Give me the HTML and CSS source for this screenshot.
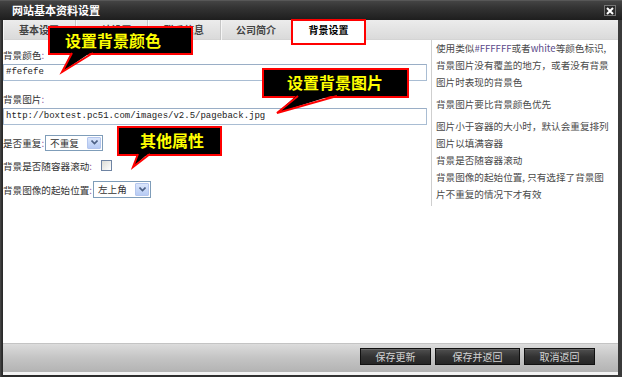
FILE: index.html
```html
<!DOCTYPE html>
<html lang="zh-CN">
<head>
    <meta charset="UTF-8">
    <title>网站基本资料设置</title>
    <link rel="stylesheet" href="styles.css">
</head>
<body>
<div class="window">
    <div class="titlebar">
        <span class="title">网站基本资料设置</span>
        <span class="close">
            <svg width="8" height="8" viewBox="0 0 8 8"><path d="M1 1L7 7M7 1L1 7" stroke="#fff" stroke-width="2"/></svg>
        </span>
    </div>
    <div class="frame">
        <ul class="tabs">
            <li>基本设置</li>
            <li>网站设置</li>
            <li>联系信息</li>
            <li>公司简介</li>
            <li class="cur">背景设置</li>
        </ul>
        <div class="content">
            <div class="form">
                <div class="label">背景颜色<i>:</i></div>
                <div class="text mono">#fefefe</div>
                <div class="label second">背景图片<i>:</i></div>
                <div class="text mono">http://boxtest.pc51.com/images/v2.5/pageback.jpg</div>
                <div class="row r1">
                    <span>是否重复<i>:</i></span>
                    <span class="select"><span class="val">不重复</span><span class="arrow"><svg width="7" height="5" viewBox="0 0 7 5"><path d="M0.5 0.5L3.5 3.5L6.5 0.5" fill="none" stroke="#4d6185" stroke-width="1.6"/></svg></span></span>
                </div>
                <div class="row r2">
                    <span>背景是否随容器滚动<i>:</i></span>
                    <span class="check"></span>
                </div>
                <div class="row r3">
                    <span>背景图像的起始位置<i>:</i></span>
                    <span class="select tall"><span class="val">左上角</span><span class="arrow"><svg width="7" height="5" viewBox="0 0 7 5"><path d="M0.5 0.5L3.5 3.5L6.5 0.5" fill="none" stroke="#4d6185" stroke-width="1.6"/></svg></span></span>
                </div>
            </div>
            <div class="help">
                <p>使用类似<em>#FFFFFF</em>或者<em>white</em>等颜色标识,<br>背景图片没有覆盖的地方，或者没有背景<br>图片时表现的背景色</p>
                <p>背景图片要比背景颜色优先</p>
                <p>图片小于容器的大小时，默认会重复排列<br>图片以填满容器<br>背景是否随容器滚动<br>背景图像的起始位置, 只有选择了背景图<br>片不重复的情况下才有效</p>
            </div>
        </div>
        <div class="toolbar">
            <span class="btn">保存更新</span>
            <span class="btn wide">保存并返回</span>
            <span class="btn">取消返回</span>
        </div>
    </div>

    <div class="callout c1">设置背景颜色
        <svg class="tail" width="60" height="50"><polygon points="24,25 45,25 14,46" fill="#000"/><polyline points="24,27 14,46 45,27" fill="none" stroke="#f00" stroke-width="2"/></svg>
    </div>
    <div class="callout c2">设置背景图片
        <svg class="tail" width="80" height="50"><polygon points="36,26 75,26 15,45" fill="#000"/><polyline points="36,28 15,45 75,28" fill="none" stroke="#f00" stroke-width="2"/></svg>
    </div>
    <div class="callout c3">其他属性
        <svg class="tail" width="40" height="45"><polygon points="21,26 33,26 16,41" fill="#000"/><polyline points="21,28 16,41 33,28" fill="none" stroke="#f00" stroke-width="2"/></svg>
    </div>
</div>
</body>
</html>
```

FILE: styles.css
```css
* {margin:0; padding:0; list-style:none; box-sizing:border-box;}
body {font-family:"Noto Sans CJK SC", "Liberation Sans", sans-serif; font-size:10px; color:#333;}
i {font-style:normal; color:#7a3a8c;}

.window {width:622px; height:377px; position:relative; display:flex; flex-direction:column;
    background:linear-gradient(90deg, #4a4a4a, #2a2a2a 2px, #3a3a3a);}

.titlebar {height:20px; flex:none; display:flex; align-items:center; justify-content:space-between; padding:0 6px 0 12px;
    background:linear-gradient(#6a6a6a 0, #444 1px, #333 40%, #1e1e1e 100%);}
.titlebar .title {color:#fff; font-size:11px; font-weight:bold; line-height:20px;}
.titlebar .close {width:12px; height:11px; display:flex; align-items:center; justify-content:center; margin-top:1px;
    background:#2a2a2a; border:1px solid #777;}

.frame {flex:1; display:flex; flex-direction:column; margin:0 4px 2px 3px; background:#f3f3f3;}

.tabs {height:20px; flex:none; display:flex; background:linear-gradient(#ececec, #dadada); border-bottom:1px solid #d4d4d4;}
.tabs li {height:20px; line-height:20px; text-align:center; font-weight:bold; color:#444; border-right:1px solid #c6c6c6; box-shadow:inset 1px 0 0 #f6f6f6;}
.tabs li:nth-child(1) {width:73px;}
.tabs li:nth-child(2) {width:72px;}
.tabs li:nth-child(3) {width:73px;}
.tabs li:nth-child(4) {width:71px;}
.tabs li.cur {width:73px; background:#fff; color:#000; position:relative; border-right:none; box-shadow:none;}
.tabs li.cur:after {content:""; position:absolute; left:-1px; right:-1px; top:-1px; bottom:-5px; border:2px solid #f00; z-index:5;}

.content {flex:1; display:flex; align-items:flex-start; background:#fff; font-size:9.6px;}
.form {width:428px; flex:none; padding-top:8px;}
.label {line-height:14px; height:14px;}
.label.second {margin-top:11px;}
.text {width:424px; height:17px; margin-top:2px; border:1px solid #a9bdd3; border-top-color:#9aaec6; padding-left:2px; line-height:15px; color:#222;}
.mono {font-family:"Liberation Mono", monospace; font-size:9px;}

.row {display:flex; align-items:center; height:17px;}
.row.r1 {margin-top:9px;}
.row.r2 {margin-top:6px;}
.row.r3 {margin-top:7px;}
.select {display:flex; width:58px; height:16px; margin-left:1px; border:1px solid #7f9db9; background:#fff;}
.select.tall {height:17px;}
.select .val {flex:1; padding-left:4px; line-height:14px;}
.select .arrow {width:14px; display:flex; align-items:center; justify-content:center; margin:1px;
    background:linear-gradient(#dbe6fb, #b7cbf4); border:1px solid #b4c6ee; border-radius:1px;}
.check {width:11px; height:11px; margin-left:9px; border:1px solid #6f84a3; background:linear-gradient(135deg, #dcdcd6, #fff);}

.help {flex:1; border-left:1px solid #cfcfcf; padding:0 0 3px 4px; line-height:17px; color:#4a4a4a;}
.help p {margin-bottom:5px;}
.help p:last-child {margin-bottom:0;}
.help em {font-style:normal; color:#5a4a8a;}

.toolbar {height:29px; flex:none; display:flex; justify-content:flex-end; align-items:flex-start; gap:4px; padding:4px 23px 0 0;
    border-top:1px solid #c4c4c4; background:linear-gradient(#dcdcdc, #c4c4c4 50%, #b3b3b3); margin-bottom:3px;}
.btn {width:71px; height:17px; line-height:15px; text-align:center; color:#d4d4d4; border:1px solid #111;
    background:linear-gradient(#505050, #333 50%, #262626); box-shadow:inset 0 1px 0 #666;}
.btn.wide {width:85px;}

.callout {position:absolute; z-index:10; background:#000; border:2px solid #f00; color:#ff0; font-size:16px; font-weight:bold; line-height:25px; white-space:nowrap;}
.callout .tail {position:absolute; left:-2px; top:-2px; overflow:visible;}
.c1 {left:48px; top:26px; width:145px; height:29px; padding-left:15px;}
.c2 {left:262px; top:68px; width:147px; height:30px; padding-left:23px;}
.c3 {left:117px; top:126px; width:105px; height:30px; padding-left:21px;}
```
